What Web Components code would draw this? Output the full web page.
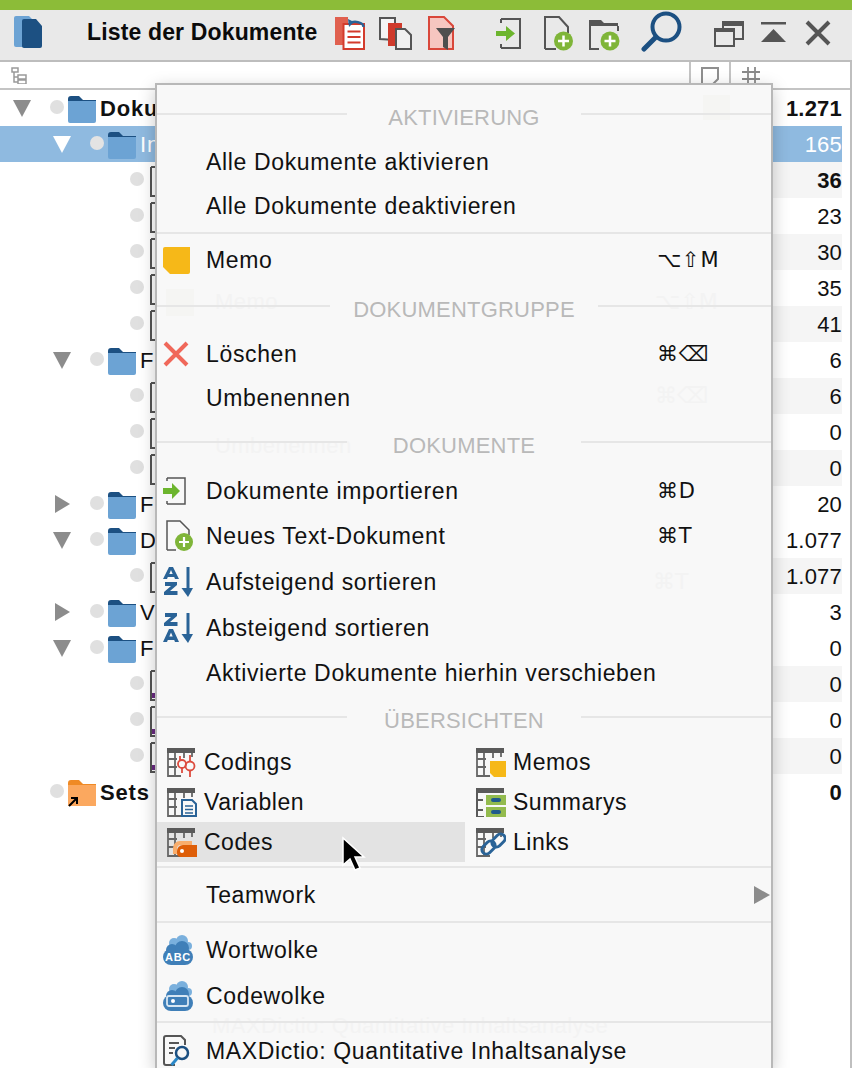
<!DOCTYPE html>
<html lang="de">
<head>
<meta charset="utf-8">
<title>Liste der Dokumente</title>
<style>
  html, body { margin: 0; height: 1068px; overflow: hidden; background: #fff; }
  body { font-family: "Liberation Sans", Arial, sans-serif; color: #111; position: relative; }
</style>
</head>
<body>
<template id="t-toolbar">
  <style>
    :host { display: block; }
    .green { height: 10px; background: #8cbc38; }
    .bar { height: 50px; background: #e9e9e9; border-bottom: 2px solid #bdbdbd; display: flex; align-items: center; }
    h1 { margin: 0 0 0 45px; width: 248px; padding-bottom: 6px; font: bold 23px/44px "Liberation Sans", Arial, sans-serif; letter-spacing: .15px; color: #0b0b0b; white-space: nowrap; }
    app-icon { height: 50px; }
  </style>
  <div class="green"></div>
  <div class="bar">
    <app-icon name="logo" style="margin-left:14px"></app-icon>
    <h1><slot></slot></h1>
    <app-icon name="paste"></app-icon>
    <app-icon name="copy" style="margin-left:14px"></app-icon>
    <app-icon name="filterdoc" style="margin-left:16px"></app-icon>
    <app-icon name="import" style="margin-left:41px"></app-icon>
    <app-icon name="newdoc" style="margin-left:22px"></app-icon>
    <app-icon name="newfolder" style="margin-left:14px"></app-icon>
    <app-icon name="search" style="margin-left:21px"></app-icon>
    <app-icon name="window" style="margin-left:32px"></app-icon>
    <app-icon name="collapse" style="margin-left:17px"></app-icon>
    <app-icon name="close" style="margin-left:19px"></app-icon>
  </div>
</template>

<template id="t-tree">
  <style>
    :host { display: block; box-sizing: border-box; width: 852px; height: 1006px; border-right: 2px solid #bfbfbf; }
  </style>
  <slot></slot>
</template>

<template id="t-colhead">
  <style>
    :host { display: grid; grid-template-columns: 689px 40px 1fr; height: 26px; border-bottom: 2px solid #c4c4c4; background: #fff; }
    div { display: flex; align-items: center; }
    div + div { border-left: 2px solid #c4c4c4; box-sizing: border-box; }
  </style>
  <div style="padding-left:11px"><app-icon name="treehead"></app-icon></div>
  <div style="padding-left:10px"><app-icon name="notehead"></app-icon></div>
  <div style="padding-left:11px"><app-icon name="hash"></app-icon></div>
</template>

<template id="t-row">
  <style>
    :host { display: flex; align-items: center; height: 36px; width: 842px; font-size: 22px; position: relative; }
    :host([selected]) { background: #8fbae0; color: #fff; }
    :host([bold]) { font-weight: bold; }
    .tri { width: 20px; height: 20px; flex: none; }
    .dot { width: 14px; height: 14px; border-radius: 50%; background: #e0e0e0; margin: -2px 0 0 18px; flex: none; }
    :host([selected]) .dot { background: #e3e3e3; }
    .ico { margin: 2px 4px 0; flex: none; display: flex; }
    .name, .count { padding-top: 2px; }
    .name { white-space: nowrap; flex: 1; letter-spacing: .8px; }
    .count { text-align: right; width: 110px; position: relative; letter-spacing: .2px; }
    .shade { position: absolute; left: 773px; right: 0; top: 0; bottom: 0; background: #f5f5f5; }
    :host(:not([shade])) .shade { display: none; }
  </style>
  <div class="shade"></div>
  <svg class="tri" viewBox="0 0 20 20"></svg>
  <span class="dot"></span>
  <span class="ico"></span>
  <span class="name"><slot></slot></span>
  <span class="count"></span>
</template>

<template id="t-menu">
  <style>
    :host {
      position: absolute; left: 155px; top: 83px; width: 618px; height: 985px; box-sizing: border-box;
      background: #f8f8f8; border-left: 2px solid #b8b8b8; border-top: 2px solid #b8b8b8; border-right: 2px solid #b8b8b8;
      box-shadow: 0 5px 16px rgba(0,0,0,.22); padding-top: 17px; overflow: hidden; display: block; color: #111;
    }
  </style>
  <slot></slot>
</template>

<template id="t-ghost">
  <style>
    :host { position: absolute; left: 0; top: 0; right: 0; bottom: 0; font-size: 22px; letter-spacing: .45px; color: #f3f3f3; pointer-events: none; display: block; }
    span { position: absolute; white-space: nowrap; line-height: 26px; }
    span.k { font-family: "DejaVu Sans", sans-serif; letter-spacing: 0; }
    b { position: absolute; display: block; background: #f5f5f3; }
  </style>
  <b style="left:546px;top:10px;width:27px;height:25px"></b>
  <b style="left:9px;top:204px;width:28px;height:27px"></b>
  <span style="left:58px;top:204px">Memo</span>
  <span class="k" style="left:498px;top:204px">⌥⇧M</span>
  <span class="k" style="left:498px;top:298px">⌘⌫</span>
  <span style="left:58px;top:348px">Umbenennen</span>
  <span class="k" style="left:496px;top:484px">⌘T</span>
  <span style="left:55px;top:928px">MAXDictio: Quantitative Inhaltsanalyse</span>
</template>

<template id="t-heading">
  <style>
    :host { display: grid; grid-template-columns: var(--line, 190px) 1fr var(--line, 190px); height: 30px; align-items: center; position: relative; }
    i { height: 2px; background: #e6e6e6; margin-top: -6px; }
    span { font-size: 22px; color: #b9b9b9; letter-spacing: .2px; text-align: center; padding-top: 2px; white-space: nowrap; }
  </style>
  <i></i><span><slot></slot></span><i></i>
</template>

<template id="t-item">
  <style>
    :host { display: grid; grid-template-columns: 49px 451px 1fr; align-items: center; height: 44px; font-size: 23px; letter-spacing: .65px; position: relative; }
    .ic { display: flex; padding-left: 6px; }
    .sc { font-family: "DejaVu Sans", sans-serif; font-size: 21px; white-space: nowrap; letter-spacing: .8px; }
    .label { white-space: nowrap; padding-top: 1px; }
    .arrow { position: absolute; right: 1px; top: 13px; width: 0; height: 0; border-left: 16px solid #8c8c8c; border-top: 9px solid transparent; border-bottom: 9px solid transparent; }
    :host(:not([submenu])) .arrow { display: none; }
  </style>
  <div class="ic"></div>
  <span class="label"><slot></slot></span>
  <span class="sc"></span>
  <div class="arrow"></div>
</template>

<template id="t-sep">
  <style>:host { display: block; height: 2px; background: #e6e6e6; position: relative; }</style>
</template>

<template id="t-grid">
  <style>
    :host { display: grid; grid-template-columns: 308px 308px; grid-auto-rows: 40px; position: relative; }
  </style>
  <slot></slot>
</template>

<template id="t-griditem">
  <style>
    :host { display: flex; align-items: center; font-size: 23px; padding-left: 10px; letter-spacing: .5px; }
    :host(:nth-child(even)) { padding-left: 11px; }
    :host([hover]) { background: #e3e3e3; }
    .ic { display: flex; width: 37px; flex: none; }
  </style>
  <div class="ic"></div>
  <span><slot></slot></span>
</template>

<script>
const cloud = `<g fill="#7ab0dd"><circle cx="11" cy="8" r="5"/><circle cx="19" cy="6" r="6"/><circle cx="25" cy="11" r="4"/></g><g fill="#3f7fb8"><rect x="0" y="14" width="30" height="16" rx="8"/><circle cx="9" cy="15" r="6"/><circle cx="19" cy="13" r="7"/></g>`;

const icons = {
  // toolbar icons, drawn on the 50px height of the bar
  logo: [28, 50, `<path d="M2 6h13l3 3v28H2a2 2 0 0 1-2-2V8a2 2 0 0 1 2-2z" fill="#6ca3d4"/><path d="M10 9h12l6 7v20a2 2 0 0 1-2 2H10a2 2 0 0 1-2-2V11a2 2 0 0 1 2-2z" fill="#1c5082"/>`],
  paste: [30, 50, `<rect x="0" y="7" width="13" height="28" fill="#e0604f"/><path d="M8.500 14h20.500v25H8.500z" fill="#fff" stroke="#d33b2c" stroke-width="2"/><path d="M12.500 21.500h13M12.500 27h13M12.500 32.500h13" stroke="#d33b2c" stroke-width="2"/><path d="M14 14a8 5 0 0 1 14.500 3" fill="none" stroke="#2a6397" stroke-width="2.500"/><path d="M13 9l6 3-5 5z" fill="#2a6397"/>`],
  copy: [33, 50, `<path d="M1 29V8h15v22z" fill="#f4f4f4" stroke="#555" stroke-width="2"/><rect x="9" y="13" width="14" height="23" fill="#cf3a2b"/><path d="M17 19h9l6 6v14H17z" fill="#f0f0f0" stroke="#555" stroke-width="2"/>`],
  filterdoc: [27, 50, `<path d="M1 7h15l9 9v23H1z" fill="#f6c6c0" stroke="#d9473a" stroke-width="2"/><path d="M8 18h19l-7 9v13l-5-3V27z" fill="#4f4f4f"/>`],
  import: [26, 50, `<path d="M5 9h19v29H5M5 9v4M5 38v-4" fill="none" stroke="#555" stroke-width="2"/><path d="M0 21h10v-5l9 7.500-9 7.500v-5H0z" fill="#6cb52d"/>`],
  newdoc: [30, 50, `<path d="M1 39V7h14l9 10v6M12 39H1" fill="none" stroke="#555" stroke-width="2"/><circle cx="19.500" cy="31" r="9.500" fill="#7fb539"/><path d="M19.500 25.500v11M14 31h11" stroke="#fff" stroke-width="2.500"/>`],
  newfolder: [32, 50, `<path d="M2 39V11" stroke="#555" stroke-width="2"/><path d="M1 10h12l3 3h14v3H1z" fill="#555"/><path d="M30 16v5M1 39h10" fill="none" stroke="#555" stroke-width="2"/><circle cx="22" cy="31" r="9.500" fill="#7fb539"/><path d="M22 25.500v11M16.500 31h11" stroke="#fff" stroke-width="2.500"/>`],
  search: [41, 50, `<circle cx="25" cy="17" r="13.500" fill="none" stroke="#1c5082" stroke-width="4"/><path d="M15 27L3 39" stroke="#1c5082" stroke-width="5" stroke-linecap="round"/>`],
  window: [30, 50, `<path d="M9 27V12h20v17h-9" fill="none" stroke="#555" stroke-width="2"/><rect x="9" y="11" width="21" height="5" fill="#555"/><rect x="1" y="19" width="19" height="17" fill="#e9e9e9" stroke="#555" stroke-width="2"/><rect x="0" y="18" width="21" height="4" fill="#555"/>`],
  collapse: [25, 50, `<rect x="0" y="12" width="25" height="2.500" fill="#555"/><path d="M12.500 19L25 32H0z" fill="#555"/>`],
  close: [26, 50, `<path d="M2 12l22 22M24 12L2 34" stroke="#555" stroke-width="4"/>`],
  // column header
  treehead: [16, 17, `<path d="M1 1h6v4H1zM7 8h8v4H7zM7 13h8v4H7zM3 5v10h4M3 10h4" fill="none" stroke="#9a9a9a" stroke-width="1.500"/>`],
  notehead: [18, 17, `<path d="M1 17V1h16v11l-5 5" fill="none" stroke="#8f8f8f" stroke-width="2"/>`],
  hash: [18, 17, `<path d="M6 0v17M13 0v17M0 5h18M0 12h18" stroke="#8a8a8a" stroke-width="1.800"/>`],
  // tree
  folder: [28, 27, `<path d="M0 3a3 3 0 0 1 3-3h8l4 4h13v4H0z" fill="#1c5082"/><path d="M0 5h28v20a2 2 0 0 1-2 2H2a2 2 0 0 1-2-2z" fill="#6ca3d4"/>`],
  sets: [28, 27, `<path d="M0 3a3 3 0 0 1 3-3h8l4 4h13v4H0z" fill="#ef8a25"/><path d="M0 5h28v21H0z" fill="#fba85f"/><path d="M1 26l7-7M3 18h6v6" fill="none" stroke="#000" stroke-width="2"/>`],
  doc: [20, 31, `<path d="M3 1h17M3 1v29h17" fill="none" stroke="#555" stroke-width="2"/>`],
  docp: [20, 31, `<path d="M3 1h17M3 1v29h17" fill="none" stroke="#555" stroke-width="2"/><rect x="4" y="23" width="3" height="5" fill="#6a2a82"/>`],
  // menu
  memo: [27, 27, `<path d="M2 0h25v25a2 2 0 0 1-2 2H7l-7-7V2a2 2 0 0 1 2-2z" fill="#f6b818"/>`],
  cross: [26, 26, `<path d="M2 2l22 22M24 2L2 24" stroke="#f0685a" stroke-width="4"/>`],
  impm: [24, 28, `<path d="M4 1h18v26H4M4 1v3M4 27v-3" fill="none" stroke="#555" stroke-width="1.500"/><path d="M0 11h9V6l8 8-8 8v-5H0z" fill="#6cb52d"/>`],
  newdocm: [30, 32, `<path d="M4 30V1h13l9 9v5M13 30H4" fill="none" stroke="#555" stroke-width="1.500"/><circle cx="21" cy="22" r="9" fill="#7fb539"/><path d="M21 17v10M16 22h10" stroke="#fff" stroke-width="2.200"/>`],
  az: [30, 32, `<path d="M0 13L6 1h4l6 12h-4l-.8-2H4.800L4 13zM6.300 8h3.400L8 4z" fill="#2a6397"/><path d="M2 16h12v3l-7 6h7.500v4H1v-3l7-6H2z" fill="#2a6397"/><path d="M25 1v25" stroke="#2a6397" stroke-width="3"/><path d="M18.500 22h11.500L25 31z" fill="#2a6397"/>`],
  za: [30, 32, `<path d="M2 1h12v3L7 10h7.500v4H1v-3l7-6H2z" fill="#2a6397"/><path d="M0 30L6 17h4l6 13h-4l-.8-2H4.800L4 30zM6.300 24.500h3.400L8 20.500z" fill="#2a6397"/><path d="M25 1v25" stroke="#2a6397" stroke-width="3"/><path d="M18.500 22h11.500L25 31z" fill="#2a6397"/>`],
  codings: [29, 29, `<use href="#g"/><g fill="none" stroke="#dc4c3e" stroke-width="1.800"><circle cx="15" cy="16" r="4"/><circle cx="23" cy="18" r="4.500"/><path d="M13 8v4M15 20v5M23 7v6M23 23v6"/></g>`, 1],
  variablen: [30, 29, `<use href="#g"/><path d="M15 12h10l4 4v12H15z" fill="#f8f8f8" stroke="#2a6397" stroke-width="2"/><path d="M18 18h8M18 21.500h8M18 25h8" stroke="#2a6397" stroke-width="1.500"/>`, 1],
  codes: [30, 29, `<use href="#g"/><path d="M6 20a7 7 0 0 1 7-7h12v4H14a4 4 0 0 0-4 4v5H6z" fill="#f8ad6c"/><path d="M10 23a6 6 0 0 1 6-6h14v12H14a4 4 0 0 1-4-4z" fill="#de5e08"/><circle cx="15" cy="23" r="2" fill="#fff"/>`, 1],
  memos: [30, 29, `<use href="#g"/><path d="M14 13h16v16H18l-4-4z" fill="#f6b818"/>`, 1],
  summarys: [30, 29, `<rect x="0" y="0" width="28" height="5" fill="#5a5a5a"/><path d="M1 5v24h7M1 12h6M1 22h6" fill="none" stroke="#5a5a5a" stroke-width="2"/><path d="M10 7h20v10H10zM10 19h20v10H10z" fill="#93bb4e"/><rect x="15" y="10" width="10" height="4" rx="2" fill="#1f5a8c"/><rect x="15" y="22" width="10" height="4" rx="2" fill="#1f5a8c"/>`],
  links: [30, 29, `<use href="#g"/><g fill="none" stroke="#2a6397" stroke-width="3"><rect x="15" y="8" width="15" height="9" rx="4.500" transform="rotate(-45 22.500 12.500)"/><rect x="5" y="15" width="15" height="9" rx="4.500" transform="rotate(-45 12.500 19.500)"/></g>`, 1],
  wort: [30, 30, `${cloud}<text x="15" y="26" text-anchor="middle" font-family="Liberation Sans, sans-serif" font-size="11" font-weight="bold" fill="#fff">ABC</text>`],
  code: [30, 30, `${cloud}<rect x="4" y="15" width="21" height="10" rx="2" fill="#3f7fb8" stroke="#d6e6f3" stroke-width="1.800"/><circle cx="10" cy="20" r="2" fill="#fff"/>`],
  dictio: [28, 32, `<path d="M12 30H3a2 2 0 0 1-2-2V3a2 2 0 0 1 2-2h15l4 4v5" fill="none" stroke="#555" stroke-width="2"/><path d="M6 8h10M6 13h6M6 18h4" stroke="#555" stroke-width="1.800"/><circle cx="19" cy="18" r="6" fill="none" stroke="#1c5082" stroke-width="2.500"/><path d="M14.500 23l-6 7" stroke="#2a88c8" stroke-width="3"/>`]
};

const gridBase = `<path d="M1 4v24h13M1 11h9M1 19h9M8 4v24M17 4v6M25 4v5" fill="none" stroke="#666" stroke-width="1.800"/><rect x="0" y="0" width="28" height="5" fill="#5a5a5a"/>`;

function iconSvg(name) {
  const [w, h, body, withGrid] = icons[name];
  const inner = withGrid ? body.replace('<use href="#g"/>', gridBase) : body;
  return `<svg xmlns="http://www.w3.org/2000/svg" width="${w}" height="${h}" viewBox="0 0 ${w} ${h}">${inner}</svg>`;
}

function fromTemplate(el, id) {
  const root = el.attachShadow({ mode: "open" });
  root.appendChild(document.getElementById(id).content.cloneNode(true));
  return root;
}

class AppIcon extends HTMLElement {
  connectedCallback() {
    if (this.shadowRoot) return;
    const root = this.attachShadow({ mode: "open" });
    root.innerHTML = `<style>:host{display:inline-flex;flex:none}svg{display:block}</style>${iconSvg(this.getAttribute("name"))}`;
  }
}
customElements.define("app-icon", AppIcon);

class AppToolbar extends HTMLElement {
  constructor() { super(); fromTemplate(this, "t-toolbar"); }
}
customElements.define("app-toolbar", AppToolbar);

class DocTree extends HTMLElement {
  constructor() { super(); fromTemplate(this, "t-tree"); }
}
customElements.define("doc-tree", DocTree);

class ColHead extends HTMLElement {
  constructor() { super(); fromTemplate(this, "t-colhead"); }
}
customElements.define("col-head", ColHead);

class TreeRow extends HTMLElement {
  constructor() { super(); fromTemplate(this, "t-row"); }
  connectedCallback() {
    const root = this.shadowRoot;
    const level = +this.getAttribute("level") || 0;
    const tri = this.getAttribute("tri");
    const svg = root.querySelector(".tri");
    svg.style.marginLeft = 12 + level * 40 + "px";
    const fill = this.hasAttribute("selected") ? "#fff" : "#8c8c8c";
    if (tri === "down") svg.innerHTML = `<path d="M1 2h18L10 19z" fill="${fill}"/>`;
    if (tri === "right") svg.innerHTML = `<path d="M3 1l15 9-15 9z" fill="${fill}"/>`;
    root.querySelector(".ico").innerHTML = iconSvg(this.getAttribute("icon") || "folder");
    root.querySelector(".count").textContent = this.getAttribute("count") || "";
  }
}
customElements.define("tree-row", TreeRow);

class CtxMenu extends HTMLElement {
  constructor() { super(); fromTemplate(this, "t-menu"); }
}
customElements.define("ctx-menu", CtxMenu);

class MenuGhost extends HTMLElement {
  constructor() { super(); fromTemplate(this, "t-ghost"); }
}
customElements.define("menu-ghost", MenuGhost);

class MenuHeading extends HTMLElement {
  constructor() { super(); fromTemplate(this, "t-heading"); }
}
customElements.define("menu-heading", MenuHeading);

class MenuSep extends HTMLElement {
  constructor() { super(); fromTemplate(this, "t-sep"); }
}
customElements.define("menu-sep", MenuSep);

class MenuItem extends HTMLElement {
  constructor() { super(); fromTemplate(this, "t-item"); }
  connectedCallback() {
    const root = this.shadowRoot;
    if (this.getAttribute("icon")) root.querySelector(".ic").innerHTML = iconSvg(this.getAttribute("icon"));
    root.querySelector(".sc").textContent = this.getAttribute("shortcut") || "";
  }
}
customElements.define("menu-item", MenuItem);

class MenuGrid extends HTMLElement {
  constructor() { super(); fromTemplate(this, "t-grid"); }
}
customElements.define("menu-grid", MenuGrid);

class GridItem extends HTMLElement {
  constructor() { super(); fromTemplate(this, "t-griditem"); }
  connectedCallback() {
    this.shadowRoot.querySelector(".ic").innerHTML = iconSvg(this.getAttribute("icon"));
  }
}
customElements.define("grid-item", GridItem);

class MouseCursor extends HTMLElement {
  constructor() {
    super();
    this.attachShadow({ mode: "open" }).innerHTML = `<style>:host{position:absolute;left:340px;top:836px}svg{display:block}</style>
      <svg width="26" height="38" viewBox="0 0 26 38"><path d="M3 2v27l7-6 5 11 5-2-5-11h9z" fill="#000" stroke="#fff" stroke-width="1.500"/></svg>`;
  }
}
customElements.define("mouse-cursor", MouseCursor);
</script>

<app-toolbar>Liste der Dokumente</app-toolbar>
<doc-tree>
  <col-head></col-head>
  <tree-row tri="down" count="1.271" bold>Dokumente</tree-row>
  <tree-row level="1" tri="down" count="165" selected>In</tree-row>
  <tree-row level="2" icon="doc" count="36" shade bold></tree-row>
  <tree-row level="2" icon="doc" count="23"></tree-row>
  <tree-row level="2" icon="doc" count="30" shade></tree-row>
  <tree-row level="2" icon="doc" count="35"></tree-row>
  <tree-row level="2" icon="doc" count="41" shade></tree-row>
  <tree-row level="1" tri="down" count="6">F</tree-row>
  <tree-row level="2" icon="doc" count="6" shade></tree-row>
  <tree-row level="2" icon="doc" count="0"></tree-row>
  <tree-row level="2" icon="doc" count="0" shade></tree-row>
  <tree-row level="1" tri="right" count="20">F</tree-row>
  <tree-row level="1" tri="down" count="1.077">D</tree-row>
  <tree-row level="2" icon="doc" count="1.077" shade></tree-row>
  <tree-row level="1" tri="right" count="3">V</tree-row>
  <tree-row level="1" tri="down" count="0">F</tree-row>
  <tree-row level="2" icon="docp" count="0" shade></tree-row>
  <tree-row level="2" icon="docp" count="0"></tree-row>
  <tree-row level="2" icon="docp" count="0" shade></tree-row>
  <tree-row icon="sets" count="0" bold>Sets</tree-row>
</doc-tree>

<ctx-menu>
  <menu-ghost aria-hidden="true"></menu-ghost>
  <menu-heading>AKTIVIERUNG</menu-heading>
  <menu-item style="margin-top:8px">Alle Dokumente aktivieren</menu-item>
  <menu-item>Alle Dokumente deaktivieren</menu-item>
  <menu-sep style="margin-top:4px"></menu-sep>
  <menu-item icon="memo" shortcut="⌥⇧M" style="margin-top:4px">Memo</menu-item>
  <menu-heading style="margin-top:12px;--line:173px">DOKUMENTGRUPPE</menu-heading>
  <menu-item icon="cross" shortcut="⌘⌫" style="margin-top:8px">Löschen</menu-item>
  <menu-item>Umbenennen</menu-item>
  <menu-heading style="margin-top:10px">DOKUMENTE</menu-heading>
  <menu-item icon="impm" shortcut="⌘D" style="margin-top:8px;height:45px">Dokumente importieren</menu-item>
  <menu-item icon="newdocm" shortcut="⌘T" style="height:46px">Neues Text-Dokument</menu-item>
  <menu-item icon="az" style="height:46px">Aufsteigend sortieren</menu-item>
  <menu-item icon="za" style="height:45px">Absteigend sortieren</menu-item>
  <menu-item style="height:45px">Aktivierte Dokumente hierhin verschieben</menu-item>
  <menu-heading style="margin-top:10px">ÜBERSICHTEN</menu-heading>
  <menu-grid style="margin-top:7px">
    <grid-item icon="codings">Codings</grid-item>
    <grid-item icon="memos">Memos</grid-item>
    <grid-item icon="variablen">Variablen</grid-item>
    <grid-item icon="summarys">Summarys</grid-item>
    <grid-item icon="codes" hover>Codes</grid-item>
    <grid-item icon="links">Links</grid-item>
  </menu-grid>
  <menu-sep style="margin-top:4px"></menu-sep>
  <menu-item submenu style="margin-top:5px">Teamwork</menu-item>
  <menu-sep style="margin-top:4px"></menu-sep>
  <menu-item icon="wort" style="margin-top:5px">Wortwolke</menu-item>
  <menu-item icon="code" style="margin-top:2px">Codewolke</menu-item>
  <menu-sep style="margin-top:3px"></menu-sep>
  <menu-item icon="dictio" style="margin-top:6px">MAXDictio: Quantitative Inhaltsanalyse</menu-item>
</ctx-menu>
<mouse-cursor></mouse-cursor>
</body>
</html>
